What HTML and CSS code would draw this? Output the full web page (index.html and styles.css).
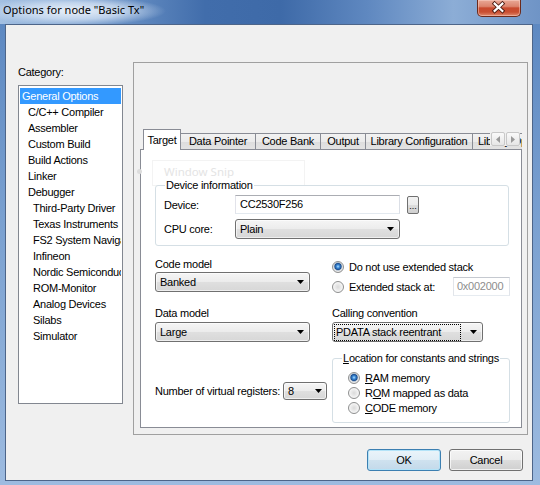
FILE: index.html
```html
<!DOCTYPE html>
<html>
<head>
<meta charset="utf-8">
<title>Options for node "Basic Tx"</title>
<link rel="stylesheet" href="styles.css">
</head>
<body>
<div class="window">
  <div class="titlebar">
    <span class="title">Options for node "Basic Tx"</span>
    <div class="close">
      <svg width="44" height="17" viewBox="0 0 44 17">
        <path d="M18 4.5 L26 12 M26 4.5 L18 12" stroke="#4a1a10" stroke-width="4" stroke-linecap="square" fill="none"/>
        <path d="M18 4.5 L26 12 M26 4.5 L18 12" stroke="#ffffff" stroke-width="2.2" stroke-linecap="square" fill="none"/>
      </svg>
    </div>
  </div>
  <div class="client">
    <div class="main">
      <div class="catcol">
        <div class="catlabel">Category:</div>
        <div class="catlist">
          <div class="item sel">General Options</div>
          <div class="item l1">C/C++ Compiler</div>
          <div class="item l1">Assembler</div>
          <div class="item l1">Custom Build</div>
          <div class="item l1">Build Actions</div>
          <div class="item l1">Linker</div>
          <div class="item l1">Debugger</div>
          <div class="item l2">Third-Party Driver</div>
          <div class="item l2">Texas Instruments</div>
          <div class="item l2">FS2 System Navigator</div>
          <div class="item l2">Infineon</div>
          <div class="item l2">Nordic Semiconductor</div>
          <div class="item l2">ROM-Monitor</div>
          <div class="item l2">Analog Devices</div>
          <div class="item l2">Silabs</div>
          <div class="item l2">Simulator</div>
        </div>
      </div>
      <div class="panel">
        <div class="tabs">
          <div class="tab active t-target">Target</div>
          <div class="tab t-dp">Data Pointer</div>
          <div class="tab t-cb">Code Bank</div>
          <div class="tab t-out">Output</div>
          <div class="tab t-lc">Library Configuration</div>
          <div class="tab t-lib">Library Options</div>
          <div class="tabscroll">
            <div class="sbtn"><svg width="4" height="7" viewBox="0 0 4 7"><path d="M4 0V7L0 3.5Z" fill="#9a9a9a"/></svg></div>
            <div class="sbtn"><svg width="4" height="7" viewBox="0 0 4 7"><path d="M0 0V7L4 3.5Z" fill="#9a9a9a"/></svg></div>
          </div>
        </div>
        <div class="page">
          <div class="ghost"><span class="ghost-text">Window Snip</span></div>
          <div class="ghost-dot"></div>

          <div class="group devgroup">
            <span class="gtitle">Device information</span>
            <div class="devrow">
              <span class="devlabel">Device:</span>
              <div class="textbox dev">CC2530F256</div>
              <div class="ellipsis">...</div>
            </div>
            <div class="devrow second">
              <span class="devlabel">CPU core:</span>
              <div class="combo cpu"><span class="cval">Plain</span><svg class="arrow" width="7" height="4" viewBox="0 0 7 4"><path d="M0 0H7L3.5 4Z" fill="#000"/></svg></div>
            </div>
          </div>

          <div class="row ra">
            <div class="col">
              <div class="lbl">Code model</div>
              <div class="combo model"><span class="cval">Banked</span><svg class="arrow" width="7" height="4" viewBox="0 0 7 4"><path d="M0 0H7L3.5 4Z" fill="#000"/></svg></div>
            </div>
            <div class="col">
              <div class="radrow first"><span class="radio on"></span><span class="rtext">Do not use extended stack</span></div>
              <div class="radrow ext"><span class="radio"></span><span class="rtext">Extended stack at:</span><div class="textbox addr">0x002000</div></div>
            </div>
          </div>

          <div class="row rb">
            <div class="col">
              <div class="lbl">Data model</div>
              <div class="combo model low"><span class="cval">Large</span><svg class="arrow" width="7" height="4" viewBox="0 0 7 4"><path d="M0 0H7L3.5 4Z" fill="#000"/></svg></div>
            </div>
            <div class="col">
              <div class="lbl">Calling convention</div>
              <div class="combo call low"><span class="focus">PDATA stack reentrant</span><svg class="arrow" width="7" height="4" viewBox="0 0 7 4"><path d="M0 0H7L3.5 4Z" fill="#000"/></svg></div>
            </div>
          </div>

          <div class="row rc">
            <div class="col">
              <div class="vregs">
                <span class="vlabel">Number of virtual registers:</span>
                <div class="combo small"><span class="cval">8</span><svg class="arrow" width="7" height="4" viewBox="0 0 7 4"><path d="M0 0H7L3.5 4Z" fill="#000"/></svg></div>
              </div>
            </div>
            <div class="col">
              <div class="group locgroup">
                <span class="gtitle"><u>L</u>ocation for constants and strings</span>
                <div class="radrow loc"><span class="radio on"></span><span class="rtext"><u>R</u>AM memory</span></div>
                <div class="radrow loc"><span class="radio"></span><span class="rtext">R<u>O</u>M mapped as data</span></div>
                <div class="radrow loc"><span class="radio"></span><span class="rtext"><u>C</u>ODE memory</span></div>
              </div>
            </div>
          </div>
        </div>
      </div>
    </div>
    <div class="buttons">
      <div class="btn default">OK</div>
      <div class="btn">Cancel</div>
    </div>
  </div>
</div>
</body>
</html>
```

FILE: styles.css
```css
* { box-sizing: border-box; }
html, body { margin: 0; padding: 0; }
body {
  width: 540px;
  height: 485px;
  overflow: hidden;
  background: linear-gradient(180deg, #5a86c0 0%, #7aa0d0 45%, #9dbbe0 100%);
  font-family: "Liberation Sans", Arial, sans-serif;
  font-size: 11px;
  letter-spacing: -0.25px;
  color: #000;
}
.window {
  width: 540px;
  height: 485px;
  display: flex;
  flex-direction: column;
}
.titlebar {
  height: 24px;
  flex: none;
  display: flex;
  align-items: flex-start;
  background:
    radial-gradient(ellipse 92px 15px at 74px 11px, rgba(238,244,251,0.95) 0%, rgba(214,228,245,0.75) 55%, rgba(190,212,238,0) 100%),
    linear-gradient(90deg, #a3c0e2 0%, #7299cb 18%, #416dab 38%, #3e6aa8 52%, #5f88c0 68%, #8cadd6 84%, #6f94c6 100%);
}
.title {
  font-family: "Noto Sans", "Liberation Sans", sans-serif;
  font-size: 11px;
  letter-spacing: 0;
  line-height: 20px;
  padding-left: 3px;
  color: #000;
}
.close {
  margin-left: auto;
  margin-right: 19px;
  width: 44px;
  height: 17px;
  border: 1px solid #6b2a1c;
  border-top: none;
  border-radius: 0 0 5px 5px;
  background: linear-gradient(180deg, #e9a896 0%, #dc846d 40%, #c94a2e 50%, #c94e31 75%, #e08a6e 100%);
  box-shadow: inset 0 0 0 1px rgba(255,220,210,0.45);
  display: flex;
}
.close svg { display: block; margin: -1px 0 0 -1px; }

.client {
  flex: 1;
  margin: 0 7px 4px 5px;
  border: 1px solid #4d6589;
  background: #f0f0f0;
  padding: 37px 4px 0 12px;
  display: flex;
  flex-direction: column;
}
.main {
  display: flex;
  gap: 10px;
}
.catcol {
  width: 105px;
  flex: none;
}
.catlabel {
  height: 14px;
  line-height: 14px;
  margin-top: 3px;
}
.catlist {
  margin-top: 6px;
  height: 319px;
  border: 1px solid #828790;
  background: #fff;
  padding: 2px 1px;
  overflow: hidden;
}
.item {
  height: 16px;
  line-height: 16px;
  white-space: nowrap;
  overflow: hidden;
  padding-left: 2px;
}
.item.sel { background: #3399ff; color: #fff; }
.item.l1 { padding-left: 8px; }
.item.l2 { padding-left: 13px; }

.panel {
  width: 395px;
  height: 373px;
  flex: none;
  border: 1px solid #a0a0a0;
  padding: 66px 5px 6px 6px;
  display: flex;
  flex-direction: column;
}
.tabs {
  height: 21px;
  flex: none;
  display: flex;
  align-items: flex-end;
  position: relative;
  z-index: 1;
  overflow: hidden;
  padding-left: 3px;
}
.tab {
  flex: none;
  height: 16px;
  margin-bottom: 1px;
  line-height: 15px;
  text-align: center;
  white-space: nowrap;
  overflow: hidden;
  border: 1px solid #898c95;
  border-bottom: none;
  background: linear-gradient(180deg, #f2f2f2 0%, #ebebeb 50%, #dddddd 51%, #e3e3e3 100%);
  margin-left: -1px;
}
.tab.active {
  height: 21px;
  margin-bottom: 0;
  line-height: 20px;
  background: #fff;
  margin-left: 0;
  position: relative;
  z-index: 2;
  padding-bottom: 2px;
}
.t-target { width: 38px; }
.t-dp { width: 76px; }
.t-cb { width: 66px; }
.t-out { width: 46px; }
.t-lc { width: 108px; }
.t-lib { width: 90px; text-align: left; padding-left: 5px; }
.tabscroll {
  position: absolute;
  right: 2px;
  top: 3px;
  display: flex;
  gap: 1px;
  background: #f0f0f0;
  padding-left: 1px;
}
.sbtn {
  width: 14px;
  height: 14px;
  border: 1px solid #c8c8c8;
  border-radius: 2px;
  background: linear-gradient(180deg, #fafafa, #e6e6e6);
  display: flex;
  align-items: center;
  justify-content: center;
}
.sbtn svg { display: block; }

.page {
  flex: 1;
  margin-top: -1px;
  background: #fff;
  border: 1px solid #898c95;
  position: relative;
  padding: 35px 0 0 14px;
}
.ghost {
  position: absolute;
  left: 11px;
  top: 10px;
  width: 153px;
  height: 26px;
  border: 1px solid #f3f3f3;
  padding-left: 11px;
  line-height: 22px;
}
.ghost-text {
  font-family: "Noto Sans", "Liberation Sans", sans-serif;
  font-size: 11.5px;
  letter-spacing: 0;
  color: #e4e4e4;
}
.ghost-dot {
  position: absolute;
  left: -4px;
  top: 19px;
  width: 5px;
  height: 5px;
  border-radius: 50%;
  background: #dcdcdc;
}

.group {
  position: relative;
  border: 1px solid #d5dfe5;
  border-radius: 3px;
}
.gtitle {
  position: absolute;
  top: -8px;
  left: 9px;
  background: #fff;
  padding: 0 1px;
  line-height: 14px;
  white-space: nowrap;
}
.devgroup {
  width: 354px;
  height: 61px;
  padding: 9px 0 0 8px;
}
.devrow {
  display: flex;
  align-items: center;
  height: 19px;
}
.devrow.second {
  height: 20px;
  margin-top: 5px;
}
.devlabel {
  width: 71px;
  flex: none;
}
.textbox {
  height: 19px;
  background: #fff;
  border: 1px solid;
  border-color: #abadb3 #dbdfe6 #e3e9ef #e2e3ea;
  padding-left: 4px;
  line-height: 17px;
  white-space: nowrap;
}
.textbox.dev { width: 165px; }
.ellipsis {
  width: 12px;
  height: 18px;
  margin-left: 7px;
  border: 1px solid #707070;
  border-radius: 2px;
  background: linear-gradient(180deg, #f2f2f2 0%, #ebebeb 50%, #dddddd 51%, #cfcfcf 100%);
  font-size: 9px;
  letter-spacing: 0;
  line-height: 12px;
  text-align: center;
  padding-top: 3px;
}
.combo {
  position: relative;
  height: 20px;
  border: 1px solid #707070;
  border-radius: 3px;
  background: linear-gradient(180deg, #f5f5f5 0%, #ececec 48%, #dfdfdf 52%, #d7d7d7 100%);
  box-shadow: inset 0 0 0 1px rgba(255,255,255,0.6);
  display: flex;
  align-items: center;
  padding-left: 4px;
  white-space: nowrap;
}
.combo .arrow {
  position: absolute;
  right: 5px;
  top: 7px;
  display: block;
}
.combo.cpu { width: 165px; }
.combo.model { width: 155px; margin-top: 1px; }
.combo.low { margin-top: 2px; }
.combo.call { width: 151px; padding-left: 1px; }
.combo.small { width: 44px; height: 18px; }
.combo.small .arrow { top: 6px; right: 4px; }
.focus {
  width: 127px;
  height: 17px;
  line-height: 15px;
  border: 1px dotted #000;
  padding-left: 1px;
}

.row {
  display: grid;
  grid-template-columns: 177px 178px;
  align-items: start;
}
.ra { margin-top: 11px; }
.rb { margin-top: 10px; }
.rc { margin-top: 7px; }
.lbl {
  height: 14px;
  line-height: 14px;
}
.radrow {
  display: flex;
  align-items: center;
  white-space: nowrap;
}
.radrow.first { height: 14px; margin-top: 3px; }
.radrow.ext { height: 19px; margin-top: 3px; }
.radrow.loc { height: 15px; }
.rtext { margin-left: 5px; }
.radio {
  width: 12px;
  height: 12px;
  flex: none;
  border-radius: 50%;
  border: 1px solid #8e8f8f;
  background: radial-gradient(circle at 50% 50%, #dadada 0, #ececec 45%, #f7f7f7 70%, #d4d4d4 100%);
}
.radio.on {
  background: radial-gradient(circle at 50% 45%, #b3e1ff 0, #3b8ad8 1.6px, #1d4f90 3.2px, #aebccb 3.9px, #f0f0f0 4.8px, #d6d6d6 6px);
}
.textbox.addr {
  width: 57px;
  margin-left: auto;
  color: #8d8d8d;
  border-color: #c5c9d0 #e0e4ea #e6ebf0 #e2e5ea;
  padding-left: 3px;
}
.vregs {
  display: flex;
  align-items: center;
  margin-top: 33px;
}
.vlabel {
  width: 128px;
  flex: none;
  white-space: nowrap;
}
.locgroup {
  margin-top: 9px;
  width: 178px;
  height: 65px;
  padding: 11px 0 0 15px;
}

.buttons {
  display: flex;
  justify-content: flex-end;
  gap: 8px;
  margin-top: 14px;
  margin-right: 5px;
}
.btn {
  width: 74px;
  height: 22px;
  border: 1px solid #707070;
  border-radius: 3px;
  background: linear-gradient(180deg, #f2f2f2 0%, #ebebeb 50%, #dddddd 51%, #cfcfcf 100%);
  box-shadow: inset 0 0 0 1px rgba(255,255,255,0.7);
  text-align: center;
  line-height: 20px;
}
.btn.default {
  border-color: #3c7fb1;
  background: linear-gradient(180deg, #eaf4fa 0%, #e0edf6 50%, #cfe2ef 51%, #c3d9ea 100%);
  box-shadow: inset 0 0 0 1px #b3e3f8;
}
```
